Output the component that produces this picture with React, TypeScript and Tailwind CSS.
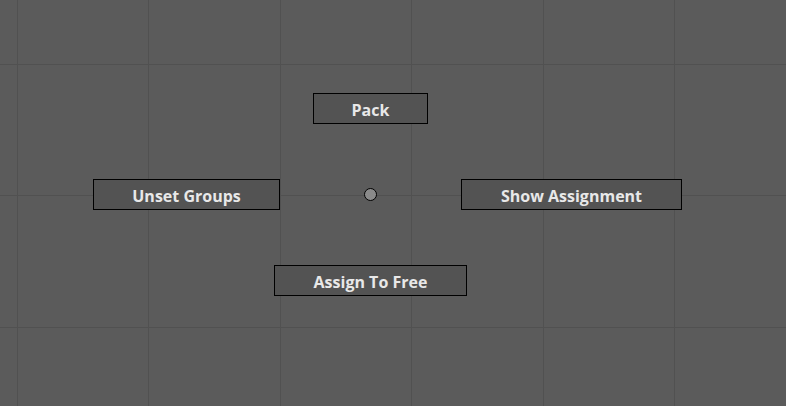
import React from "react";

const xs = [17, 148, 280, 411, 543, 674];
const ys = [64, 195, 327];

function PieButton({ label, className }: { label: string; className: string }) {
  return (
    <div
      className={`absolute flex h-[31px] items-center justify-center border border-black bg-[#535353] pt-[2px] text-[16px] font-bold text-[#e8e8e8] ${className}`}
      style={{ fontFamily: '"Open Sans", "Liberation Sans", sans-serif' }}
    >
      {label}
    </div>
  );
}

export default function App() {
  return (
    <div className="relative h-[406px] w-[786px] overflow-hidden bg-[#5b5b5b]">
      <svg className="absolute inset-0" width="786" height="406">
        {xs.map((x) => (
          <line key={"x" + x} x1={x + 0.5} y1={0} x2={x + 0.5} y2={406} stroke="#515151" strokeWidth={1} />
        ))}
        {ys.map((y) => (
          <line key={"y" + y} x1={0} y1={y + 0.5} x2={786} y2={y + 0.5} stroke="#515151" strokeWidth={1} />
        ))}
      </svg>
      <PieButton label="Pack" className="left-[313px] top-[93px] w-[115px]" />
      <PieButton label="Unset Groups" className="left-[93px] top-[179px] w-[187px]" />
      <PieButton label="Show Assignment" className="left-[461px] top-[179px] w-[221px]" />
      <PieButton label="Assign To Free" className="left-[274px] top-[265px] w-[193px]" />
      <div className="absolute left-[364px] top-[188px] h-[13px] w-[13px] rounded-full border border-black bg-[#8a8a8a]" />
    </div>
  );
}
